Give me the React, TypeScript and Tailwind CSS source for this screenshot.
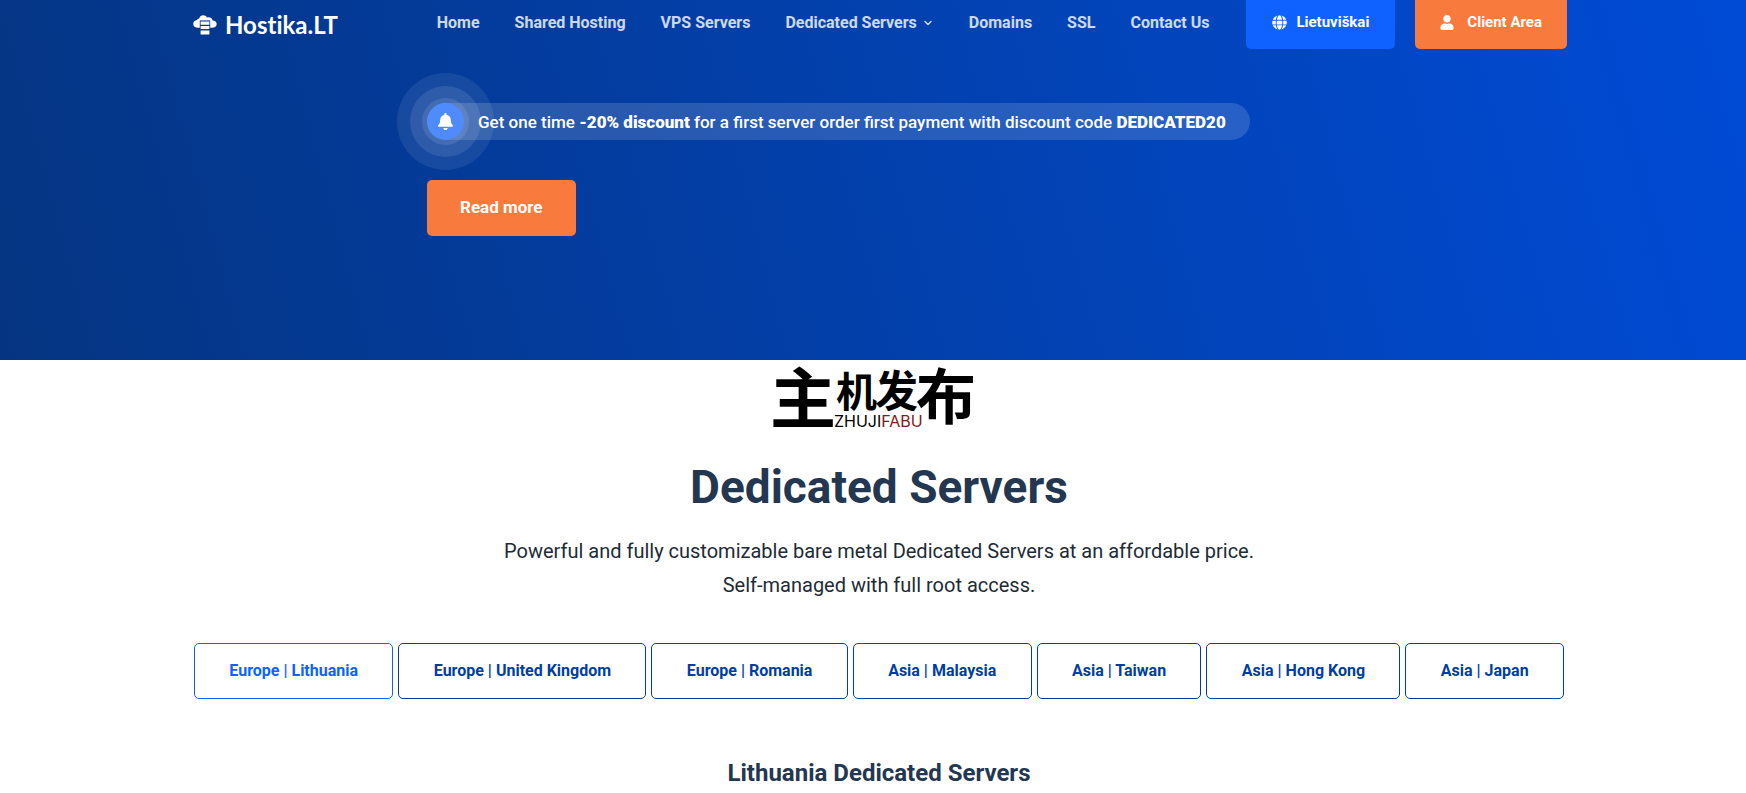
import React, { FunctionComponent, useState } from 'react'
import clsx from 'clsx'
import { ChevronDown } from 'lucide-react'
import { FaBell, FaGlobe, FaUser } from 'react-icons/fa'

const navItems = [
    { label: 'Home' },
    { label: 'Shared Hosting' },
    { label: 'VPS Servers' },
    { label: 'Dedicated Servers', hasMenu: true },
    { label: 'Domains' },
    { label: 'SSL' },
    { label: 'Contact Us' },
]

const locations = [
    { region: 'Europe', country: 'Lithuania' },
    { region: 'Europe', country: 'United Kingdom' },
    { region: 'Europe', country: 'Romania' },
    { region: 'Asia', country: 'Malaysia' },
    { region: 'Asia', country: 'Taiwan' },
    { region: 'Asia', country: 'Hong Kong' },
    { region: 'Asia', country: 'Japan' },
]

const Logo: FunctionComponent = () => (
    <a href="#" className="flex items-center gap-2 text-white">
        <svg viewBox="0 0 24 20" className="w-6 h-5" aria-hidden="true">
            <path
                fill="currentColor"
                d="M5 12.8C2.200 12.800.2 11.200.2 8.900c0-2.200 1.600-3.800 3.800-4C4.400 4 5.200 3.500 6.200 3.400 6.900 1.400 8.300.3 10.100.3c1.800 0 3.100.8 3.900 2.100 2.800-.6 5.100.7 5.600 3 2.400.1 4.100 1.500 4.100 3.600 0 2.300-1.900 3.800-4.600 3.800z"
            />
            <path fill="#053a96" d="M6.800 5.400h10.400v14.400H6.800z" />
            <path fill="currentColor" d="M7.600 6.500h8.800v3.200H7.600zM7.600 10.900h8.800v3.200H7.600zM7.600 15.500h8.800v3.900H7.600z" />
        </svg>
        <span className="text-2xl leading-6 font-bold font-['Lato',sans-serif] [font-variant-ligatures:none]">Hostika.LT</span>
    </a>
)

const Header: FunctionComponent = () => (
    <header className="flex items-start justify-between">
        <div className="pt-[13px]">
            <Logo />
        </div>
        <div className="flex items-start">
            <nav className="flex gap-[35px] pt-[11px] mr-[37px]">
                {navItems.map(({ label, hasMenu }) => (
                    <a key={label} href="#" className="flex items-center gap-[5px] text-base font-bold text-white/80 hover:text-white">
                        {label}
                        {hasMenu && <ChevronDown className="w-3 h-3" strokeWidth={3} />}
                    </a>
                ))}
            </nav>
            <div className="flex gap-5 text-[15px] leading-5 font-bold text-white">
                <button type="button" className="flex items-center gap-[9px] pt-3 pb-[17px] px-[26px] rounded-b-[5px] bg-[#0f62ff]">
                    <FaGlobe className="w-[15px] h-[15px]" />
                    Lietuviškai
                </button>
                <button type="button" className="flex items-center gap-[13px] pt-3 pb-[17px] px-[25px] rounded-b-[5px] bg-[#f87b3d]">
                    <FaUser className="w-[14px] h-[15px]" />
                    Client Area
                </button>
            </div>
        </div>
    </header>
)

const Announcement: FunctionComponent = () => (
    <div className="ml-[234px] mt-[54px] flex flex-col items-start gap-10">
        <div className="flex items-center rounded-full bg-white/15 pr-6">
            <div className="relative w-[37px] h-[37px] mr-3.5">
                {/* Pulse rings */}
                <span className="absolute -inset-[30px] rounded-full bg-white/8" />
                <span className="absolute -inset-[17px] rounded-full bg-white/10" />
                <span className="absolute -inset-[5px] rounded-full bg-white/10" />
                <span className="absolute inset-0 rounded-full bg-[#4f8bff] flex items-center justify-center text-white">
                    <FaBell className="w-[17px] h-[17px]" />
                </span>
            </div>
            <p className="relative text-[17px] leading-6 font-medium text-white">
                Get one time <b className="font-black">-20% discount</b> for a first server order first payment with discount code{' '}
                <b className="font-black">DEDICATED20</b>
            </p>
        </div>
        <a href="#" className="h-14 px-[33px] flex items-center rounded-[5px] bg-[#f87b3d] text-[17px] font-bold text-white">
            Read more
        </a>
    </div>
)

const HostLogo: FunctionComponent = () => (
    <svg viewBox="0 0 200 62" className="w-[200px] h-[62px] overflow-visible" role="img" aria-label="主机发布 ZHUJIFABU">
        <g fill="#000" fontFamily="'Noto Sans CJK SC', sans-serif" fontWeight="700">
            <text x="-3" y="57" fontSize="66">主</text>
            <text x="63" y="41" fontSize="41">机</text>
            <text x="102" y="41" fontSize="43">发</text>
            <text x="143" y="53" fontSize="60">布</text>
        </g>
        <text x="61" y="61" fontSize="16" fontFamily="'Inter', sans-serif">
            <tspan fill="#000">ZHUJI</tspan>
            <tspan fill="#7c1c20">FABU</tspan>
        </text>
    </svg>
)

const App: FunctionComponent = () => {
    const [active, setActive] = useState('Lithuania')

    return (
        <div className="bg-white font-['Roboto',sans-serif] overflow-x-hidden">
            <section className="h-[360px] pl-3.5 bg-[linear-gradient(75deg,#053582,#004bd6)]">
                <div className="max-w-[1374px] mx-auto">
                    <Header />
                    <Announcement />
                </div>
            </section>

            <div className="flex justify-center pt-1.5">
                <HostLogo />
            </div>

            <main className="pl-3">
                <div className="max-w-[1370px] mx-auto text-center text-[#243750]">
                    <h1 className="mt-8 text-[46px] leading-[54px] font-bold">Dedicated Servers</h1>
                    <p className="mt-5 text-xl leading-[34px] text-[#212b36]">
                        Powerful and fully customizable bare metal Dedicated Servers at an affordable price.
                        <br />
                        Self-managed with full root access.
                    </p>

                    {/* Locations */}
                    <div className="mt-[41px] flex gap-[5px]">
                        {locations.map(({ region, country }) => (
                            <button
                                key={country}
                                type="button"
                                onClick={() => setActive(country)}
                                className={clsx(
                                    'h-14 px-8 flex-auto rounded-[5px] border text-base font-bold whitespace-nowrap',
                                    active === country ? 'border-[#0f62ff] text-[#0f62ff]' : 'border-[#003e9f] text-[#003e9f]'
                                )}
                            >
                                {region} | {country}
                            </button>
                        ))}
                    </div>

                    <h2 className="mt-[59px] text-2xl leading-[30px] font-bold">{active} Dedicated Servers</h2>
                </div>
            </main>
        </div>
    )
}

export default App
